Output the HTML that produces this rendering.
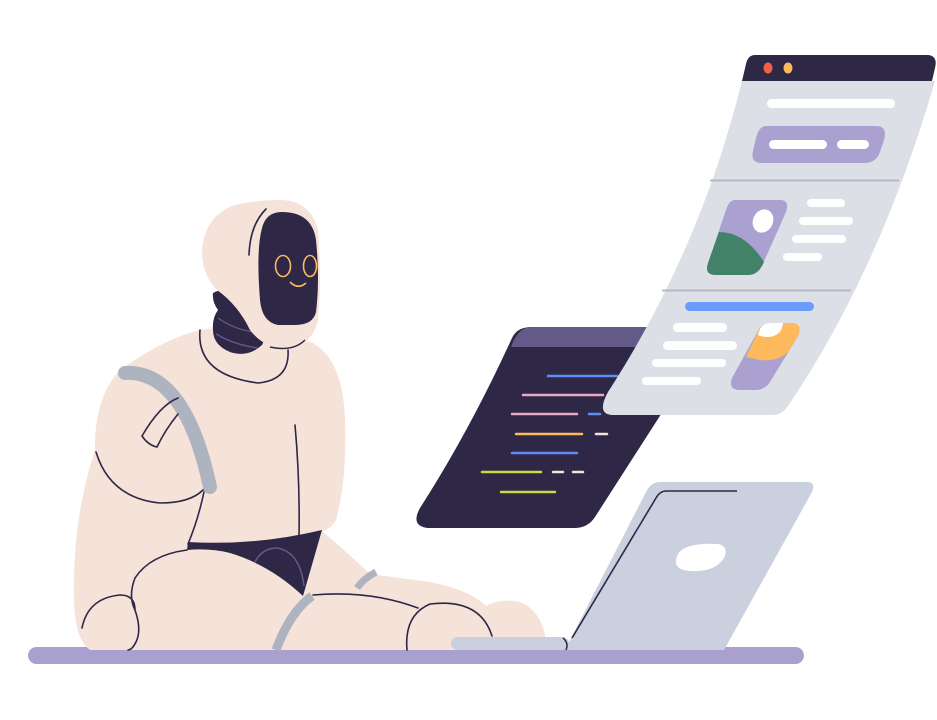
<!DOCTYPE html>
<html><head><meta charset="utf-8"><style>html,body{margin:0;padding:0;background:#fff}svg{display:block}</style></head>
<body>
<svg width="937" height="720" viewBox="0 0 937 720" xmlns="http://www.w3.org/2000/svg">
<rect x="28" y="647" width="776" height="17" rx="8.5" fill="#aaa0cf"/>

<path d="M532 327 L717 327 L595 517 Q588 528 574 528 L428 528 Q410 526 420 508 Q470 430 512 338 Q517 327 532 327 Z" fill="#2e2746"/>
<path d="M532 327 L717 327 L704 347 L511 347 Q518 327 532 327 Z" fill="#635a8a"/>
<g stroke-width="2.5" stroke-linecap="round" fill="none">
<line x1="548" y1="376" x2="617" y2="376" stroke="#5d8ef5"/>
<line x1="523" y1="395" x2="603" y2="395" stroke="#e9a6c8"/>
<line x1="512" y1="414" x2="577" y2="414" stroke="#e9a6c8"/>
<line x1="589" y1="414" x2="600" y2="414" stroke="#5d8ef5"/>
<line x1="516" y1="434" x2="582" y2="434" stroke="#fdb95c"/>
<line x1="596" y1="434" x2="607" y2="434" stroke="#f5e3da"/>
<line x1="512" y1="453" x2="577" y2="453" stroke="#5d8ef5"/>
<line x1="482" y1="472" x2="541" y2="472" stroke="#c4dd3c"/>
<line x1="553" y1="472" x2="563" y2="472" stroke="#f5e3da"/>
<line x1="573" y1="472" x2="583" y2="472" stroke="#f5e3da"/>
<line x1="501" y1="492" x2="555" y2="492" stroke="#c4dd3c"/>
</g>

<path d="M742 81 Q700 250 608 392 Q596 414 612 415 L772 415 Q782 415 788 406 Q880 270 935 81 Z" fill="#dcdfe6"/>
<path d="M755 55 L928 55 Q938 56 935 68 L932 81 L742 81 L746 64 Q748 55 755 55 Z" fill="#2e2746"/>
<ellipse cx="768" cy="68" rx="4.5" ry="5.5" fill="#f2604a"/>
<ellipse cx="788" cy="68" rx="4.5" ry="5.5" fill="#fdb95c"/>
<line x1="710" y1="180.5" x2="899" y2="180.5" stroke="#b5b8c4" stroke-width="2"/>
<line x1="662" y1="290.5" x2="851" y2="290.5" stroke="#b5b8c4" stroke-width="2"/>
<rect x="767" y="99" width="128" height="9" rx="4.5" fill="#fff"/>
<path d="M766 126 L876 126 Q888 126 884 140 L880 152 Q876 163 864 163 L762 163 Q750 163 753 151 L756 138 Q759 126 766 126 Z" fill="#aaa1d0"/>
<rect x="769" y="140" width="58" height="9" rx="4.5" fill="#fff"/>
<rect x="837" y="140" width="32" height="9" rx="4.5" fill="#fff"/>
<path d="M735 200 L780 200 Q790 200 786 212 L762 266 Q758 275 748 275 L716 275 Q704 275 708 263 L726 210 Q729 200 735 200 Z" fill="#aaa1d0"/>
<path d="M708 263 L719 232 Q745 232 764 262 Q758 275 748 275 L716 275 Q704 275 708 263 Z" fill="#418269"/>
<ellipse cx="763" cy="221" rx="10" ry="12" transform="rotate(25 763 221)" fill="#fff"/>
<g fill="#fff">
<rect x="807" y="199" width="38" height="8" rx="4"/>
<rect x="799" y="217" width="54" height="8" rx="4"/>
<rect x="792" y="235" width="54" height="8" rx="4"/>
<rect x="783" y="253" width="39" height="8" rx="4"/>
</g>
<rect x="685" y="302" width="129" height="9" rx="4.5" fill="#6a9cfb"/>
<g fill="#fff">
<rect x="673" y="323" width="54" height="9" rx="4.5"/>
<rect x="663" y="341" width="74" height="9" rx="4.5"/>
<rect x="652" y="359" width="74" height="8" rx="4"/>
<rect x="642" y="377" width="59" height="8" rx="4"/>
</g>
<path d="M770 323 L792 323 Q803 324 798 336 L770 382 Q765 390 755 390 L740 390 Q728 390 732 378 L758 331 Q762 323 770 323 Z" fill="#aaa1d0"/>
<path d="M770 323 L792 323 Q803 324 798 336 L788 352 Q778 362 760 360 Q752 358 746 357 L758 331 Q762 323 770 323 Z" fill="#fdb95c"/>
<path d="M770 323 L783 323 Q782 336 768 337 Q762 337 758 335 L760 329 Q763 323 770 323 Z" fill="#fff"/>

<path d="M660 482 L808 482 Q816 483 812 492 L724 650 L565 650 L646 492 Q651 482 660 482 Z" fill="#cbd0de"/>
<path d="M737 491 L666 491 Q660 491 656 498 L572 638" fill="none" stroke="#2e2746" stroke-width="1.6"/>
<path d="M690 546 Q702 543 718 544 Q728 546 725 556 Q718 570 698 571 Q676 572 676 562 Q676 550 690 546 Z" fill="#fff"/>

<g fill="#f5e3da">
<path d="M200 330 Q250 322 313 343 Q343 360 345 420 Q347 480 336 520 Q330 530 322 531 Q350 555 370 574 Q400 578 430 582 Q470 590 486 606 Q500 598 520 602 Q545 612 547 650 L90 650 Q75 640 74 600 Q72 520 95 450 Q94 400 118 372 Q160 340 200 330 Z"/>
<path d="M188 549 Q150 560 135 580 Q128 600 132 618 Q140 640 138 650 L313 650 L313 595 Q280 560 230 549 Z"/>
</g>
<path d="M188 542 Q255 546 322 530 L303 596 Q270 565 230 553 Q210 548 187 550 Z" fill="#2e2746"/>
<path d="M255 562 Q262 548 277 548 Q300 552 304 586" fill="none" stroke="#635a8a" stroke-width="1.5"/>
<path d="M125 373 Q185 370 210 487" fill="none" stroke="#adb3bf" stroke-width="14" stroke-linecap="round"/>
<path d="M276 650 Q290 612 312 596" fill="none" stroke="#adb3bf" stroke-width="9"/>
<path d="M357 588 Q364 578 376 572" fill="none" stroke="#adb3bf" stroke-width="7"/>
<g fill="none" stroke="#2e2746" stroke-width="1.6" stroke-linecap="round">
<path d="M200 330 Q196 375 258 383 Q290 380 288 350"/>
<path d="M178 398 Q160 405 142 436 Q148 445 157 447 Q165 430 178 414"/>
<path d="M96 452 Q110 498 160 503 Q190 503 203 490"/>
<path d="M204 492 Q198 520 188 544"/>
<path d="M295 425 Q300 480 299 537"/>
<path d="M187 550 Q150 555 135 578 Q128 596 135 610"/>
<path d="M82 628 Q88 598 120 595 Q135 595 135 610 Q142 630 136 642 Q132 650 128 650"/>
<path d="M313 595 Q370 590 418 608"/>
<path d="M407 650 Q404 615 430 604 Q480 598 492 636"/>
</g>

<rect x="451" y="637" width="118" height="13" rx="6.5" fill="#cbd0de"/>
<path d="M563 638 Q569 643 566 650" fill="none" stroke="#2e2746" stroke-width="1.5"/>

<path d="M213 293 Q225 285 250 300 Q270 330 262 345 Q248 358 230 352 Q213 345 213 330 Q212 318 218 310 Q212 302 213 293 Z" fill="#2e2746"/>
<path d="M218 318 Q235 330 255 332" fill="none" stroke="#635a8a" stroke-width="1.3"/>
<path d="M216 334 Q235 345 258 348" fill="none" stroke="#635a8a" stroke-width="1.3"/>
<path d="M280 200 Q310 200 318 230 Q322 280 318 320 Q312 345 290 348 Q265 350 250 330 Q238 305 217 290 Q202 275 202 250 Q205 215 235 205 Q255 200 280 200 Z" fill="#f5e3da"/>
<path d="M270 347 Q293 352 305 340" fill="none" stroke="#2e2746" stroke-width="1.5"/>
<path d="M282 212 Q312 212 316 240 Q320 280 316 312 Q313 325 295 325 L278 325 Q262 322 260 300 Q256 250 262 228 Q266 212 282 212 Z" fill="#2e2746"/>
<path d="M266 209 Q250 225 249 255" fill="none" stroke="#2e2746" stroke-width="1.6" stroke-linecap="round"/>
<g fill="none" stroke="#fdb95c" stroke-width="1.6">
<ellipse cx="283" cy="266" rx="7.5" ry="10.5"/>
<ellipse cx="310" cy="266" rx="6.5" ry="10.5"/>
<path d="M290 282 Q298 290 306 283"/>
</g>
</svg>
</body></html>
